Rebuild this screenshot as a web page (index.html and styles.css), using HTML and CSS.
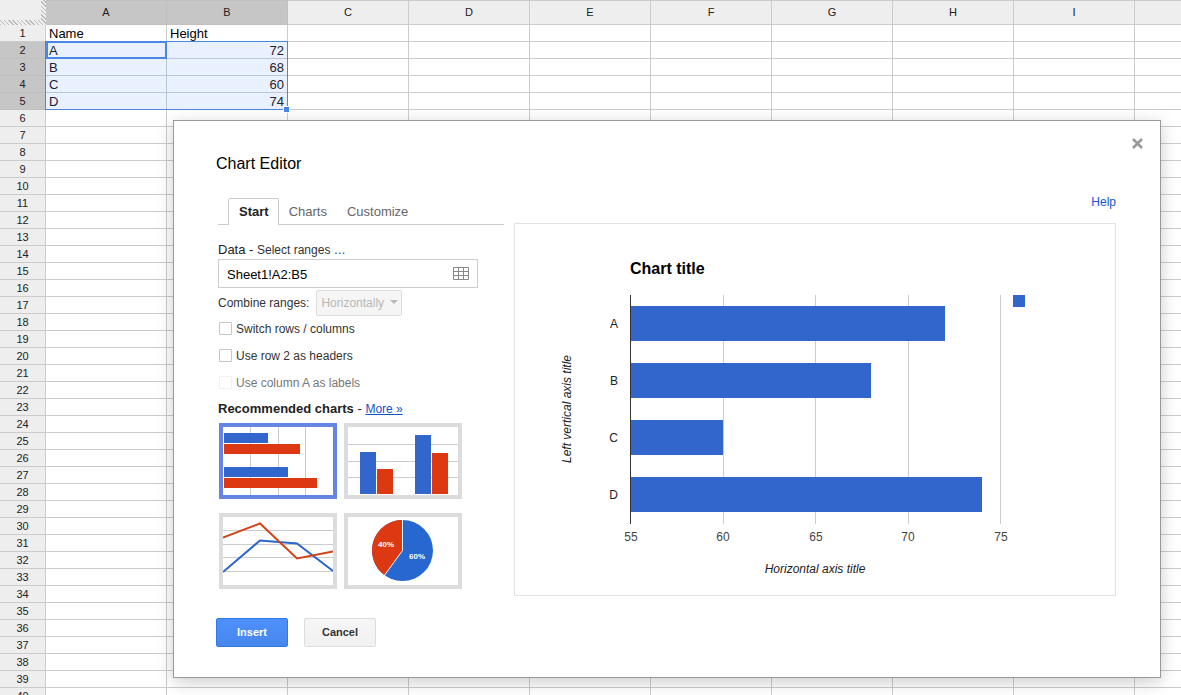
FILE: index.html
```
<!DOCTYPE html>
<html lang="en">
    <head>
        <meta charset="utf-8">
        <title>Chart Editor</title>
        <link rel="stylesheet" href="styles.css">
    </head>
    <body>

        <div class="sheet">
            <table class="grid">
                <thead></thead>
                <tbody></tbody>
            </table>
            <div class="selection">
                <div class="activecell"></div>
                <div class="handle"></div>
            </div>
        </div>

        <div class="dialog" role="dialog" aria-labelledby="dialogtitle">
            <button type="button" class="close" aria-label="Close">
                <svg width="11" height="11" viewBox="0 0 11 11"><path d="M1 1L10 10M10 1L1 10" stroke="#999" stroke-width="2.6" fill="none"/></svg>
            </button>

            <h1 class="title" id="dialogtitle">Chart Editor</h1>

            <div class="editor">
                <div class="options">
                    <div class="tabs" role="tablist">
                        <button type="button" class="tab active" role="tab">Start</button>
                        <button type="button" class="tab" role="tab">Charts</button>
                        <button type="button" class="tab" role="tab">Customize</button>
                    </div>

                    <div class="data">
                        <label for="range">Data - <span class="small">Select ranges …</span></label>
                    </div>
                    <div class="rangebox">
                        <input type="text" id="range" value="Sheet1!A2:B5">
                        <button type="button" class="pick" aria-label="Select data range">
                            <svg width="16" height="13" viewBox="0 0 16 13"><path d="M.5 .5H15.5V12.5H.5ZM.5 4.5H15.5M.5 8.5H15.5M5.5 .5V12.5M10.5 .5V12.5" stroke="#888" fill="none"/></svg>
                        </button>
                    </div>

                    <div class="combine">
                        <label for="combine">Combine ranges:</label>
                        <span class="dropdown">
                            <select id="combine" disabled>
                                <option>Horizontally</option>
                            </select>
                        </span>
                    </div>

                    <label class="check"><input type="checkbox"> Switch rows / columns</label>
                    <label class="check"><input type="checkbox"> Use row 2 as headers</label>
                    <label class="check disabled"><input type="checkbox" disabled> Use column A as labels</label>

                    <div class="recommended"><b>Recommended charts</b> - <a href="#">More »</a></div>

                    <div class="thumbs">
                        <button type="button" class="thumb active" aria-label="Bar chart">
                            <svg width="110" height="68" viewBox="0 0 110 68">
                                <path d="M27.5 0V68M55.5 0V68M82.5 0V68" stroke="#ccc"/>
                                <path d="M1 6H45V16H1ZM1 40H65V50H1Z" fill="#3366cc"/>
                                <path d="M1 17H77V27H1ZM1 51H94V61H1Z" fill="#dc3912"/>
                            </svg>
                        </button>
                        <button type="button" class="thumb" aria-label="Column chart">
                            <svg width="110" height="68" viewBox="0 0 110 68">
                                <path d="M0 17.5H110M0 34.5H110M0 50.5H110" stroke="#ccc"/>
                                <path d="M12 25H28V67H12ZM67 8H83V67H67Z" fill="#3366cc"/>
                                <path d="M29 42H45V67H29ZM84 26H100V67H84Z" fill="#dc3912"/>
                            </svg>
                        </button>
                        <button type="button" class="thumb" aria-label="Line chart">
                            <svg width="110" height="68" viewBox="0 0 110 68">
                                <path d="M0 13.5H110M0 27.5H110M0 40.5H110M0 54.5H110" stroke="#ccc"/>
                                <path d="M0 55L37 23.5L74 26.5L110 54" stroke="#2a66cc" stroke-width="2" fill="none"/>
                                <path d="M0 20.5L37 6.5L74 41.5L110 34.5" stroke="#d14319" stroke-width="2" fill="none"/>
                            </svg>
                        </button>
                        <button type="button" class="thumb" aria-label="Pie chart">
                            <svg width="110" height="68" viewBox="0 0 110 68">
                                <circle cx="54.5" cy="33.5" r="30.5" fill="#2767d0"/>
                                <path d="M54.5 33.5V3A30.5 30.5 0 0 0 36.6 58.2Z" fill="#dc3912"/>
                                <path d="M54.5 2V33.5L36 59" stroke="#fff" fill="none"/>
                                <text class="slice" x="38" y="30">40%</text>
                                <text class="slice" x="69" y="42">60%</text>
                            </svg>
                        </button>
                    </div>
                </div>

                <div class="preview">
                    <a href="#" class="help">Help</a>
                    <div class="chart">
                        <svg viewBox="0 0 600 371">
                            <text class="charttitle" x="115" y="50">Chart title</text>
                            <path d="M208.5 71V300M300.5 71V300M393.5 71V300M485.5 71V300" stroke="#ccc"/>
                            <g fill="#3366cc">
                                <rect x="116" y="82" width="314" height="35"/>
                                <rect x="116" y="139" width="240" height="35"/>
                                <rect x="116" y="196" width="92" height="35"/>
                                <rect x="116" y="253" width="351" height="35"/>
                                <rect x="498" y="71" width="12" height="12"/>
                            </g>
                            <path d="M115.5 71V300" stroke="#333"/>
                            <g class="names">
                                <text x="103" y="104">A</text>
                                <text x="103" y="161">B</text>
                                <text x="103" y="218">C</text>
                                <text x="103" y="275">D</text>
                            </g>
                            <g class="ticks">
                                <text x="116" y="317">55</text>
                                <text x="208" y="317">60</text>
                                <text x="301" y="317">65</text>
                                <text x="393" y="317">70</text>
                                <text x="486" y="317">75</text>
                            </g>
                            <text class="axis" x="300" y="349">Horizontal axis title</text>
                            <text class="axis" transform="translate(56 185) rotate(-90)">Left vertical axis title</text>
                        </svg>
                    </div>
                </div>
            </div>

            <div class="actions">
                <button type="button" class="btn primary">Insert</button>
                <button type="button" class="btn">Cancel</button>
            </div>
        </div>

        <script type="text/javascript">

            const gethead = document.querySelector('.grid thead');
            const getbody = document.querySelector('.grid tbody');

            const columns = ['A','B','C','D','E','F','G','H','I',''];
            const totalrows = 40;
            const values = [
                ['Name','Height'],
                ['A',72],
                ['B',68],
                ['C',60],
                ['D',74]
            ];

            function showhead(){
                let cells = '<th class="corner"></th>';

                columns.forEach((column,idx)=>{
                    cells += `<th class="${idx < 2 ? 'selected' : ''}">${column}</th>`;
                });

                gethead.innerHTML = `<tr>${cells}</tr>`;
            }

            function showrows(){
                let rows = '';

                for(let r = 1; r <= totalrows; r++){
                    const inrange = r >= 2 && r <= 5;
                    let cells = `<th class="${inrange ? 'selected' : ''}">${r}</th>`;

                    columns.forEach((column,idx)=>{
                        const value = values[r-1]?.[idx] ?? '';
                        const classes = [];

                        if(inrange && idx < 2) classes.push('inrange');
                        if(typeof value === 'number') classes.push('number');

                        cells += `<td class="${classes.join(' ')}">${value}</td>`;
                    });

                    rows += `<tr>${cells}</tr>`;
                }

                getbody.innerHTML = rows;
            }

            showhead();
            showrows();

        </script>
    </body>
</html>
```
FILE: styles.css
```
*{
    box-sizing: border-box;
}

body{
    font-family: "Liberation Sans", Arial, sans-serif;
    font-size: 13px;
    color: #222;
    background-color: #fff;

    margin: 0;
    height: 100vh;
    overflow: hidden;

    position: relative;
}

button, input, select{
    font-family: inherit;
    margin: 0;
}

a{
    color: #15c;
}

/* spreadsheet */

.sheet{
    position: relative;
    height: 100%;
    overflow: hidden;
}

.grid{
    width: 1256px;
    table-layout: fixed;
    border-collapse: separate;
    border-spacing: 0;
}

.grid th, .grid td{
    height: 17px;
    line-height: 16px;
    border-right: 1px solid #ccc;
    border-bottom: 1px solid #ccc;
    padding: 0 3px;
}

.grid th{
    font-size: 11px;
    font-weight: normal;
    background-color: #eee;
}

.grid thead th{
    height: 25px;
    border-top: 1px solid #ccc;
    padding-bottom: 2px;
}

.grid th:first-child{
    width: 46px;
}

.grid th.corner{
    border: none;
    border-right: 5px solid transparent;
    border-bottom: 5px solid transparent;
    background: linear-gradient(#eee, #eee) padding-box, repeating-linear-gradient(45deg, #bbb 0 1px, #eee 1px 3px) border-box;
}

.grid th.selected{
    background-color: #c6c6c6;
    border-color: #c0c0c0;
}

.grid td{
    line-height: 14px;
    color: #000;
    white-space: nowrap;
    padding-top: 2px;
}

.grid td.inrange{
    color: #223;
    background-color: #e9f0fe;
    border-color: #bcc5d6;
}

.grid td.number{
    text-align: right;
}

.selection{
    width: 243px;
    height: 69px;
    border: 1px solid #4a86e8;

    position: absolute;
    left: 45px;
    top: 41px;
}

.activecell{
    width: 121px;
    height: 18px;
    border: 2px solid #4a86e8;

    position: absolute;
    left: 0;
    top: -1px;
}

.handle{
    width: 7px;
    height: 7px;
    background-color: #4a86e8;
    border: 1px solid #fff;

    position: absolute;
    right: -3px;
    bottom: -4px;
}

/* dialog */

.dialog{
    background-color: #fff;
    border: 1px solid #999;
    box-shadow: 0 4px 16px rgba(0,0,0,0.2);
    padding: 33px 44px 30px 42px;

    position: absolute;
    top: 120px;
    left: 173px;
    right: 20px;
}

.close{
    background: none;
    border: none;
    padding: 5px;
    line-height: 0;

    position: absolute;
    top: 12px;
    right: 12px;
}

.title{
    font-size: 16px;
    font-weight: normal;
    line-height: 20px;
    color: #000;
    margin: 0 0 20px;
}

.editor{
    display: flex;
    gap: 10px;
}

.options{
    width: 288px;
    flex: none;
    padding: 4px 0 0 2px;
}

.tabs{
    display: flex;
    border-bottom: 1px solid #ccc;
    padding-left: 10px;
    margin-bottom: 17px;
}

.tab{
    height: 27px;
    font-size: 13px;
    color: #666;
    background: none;
    border: 1px solid transparent;
    border-bottom: none;
    padding: 0 9px 2px;
    margin-bottom: -1px;
}

.tab.active{
    font-weight: bold;
    color: #222;
    background-color: #fff;
    border-color: #ccc;
    border-radius: 2px 2px 0 0;
    padding-left: 10px;
}

.data{
    line-height: 16px;
    margin-bottom: 1px;
}

.small{
    font-size: 12px;
    color: #333;
}

.rangebox{
    width: 260px;
    height: 29px;
    border: 1px solid #ccc;

    display: flex;
    align-items: center;
}

.rangebox input{
    flex: 1;
    min-width: 0;
    font-size: 13px;
    color: #000;
    border: none;
    outline: none;
    padding: 1px 8px 0;
}

.pick{
    background: none;
    border: none;
    padding: 0 8px;
    line-height: 0;
}

.combine{
    font-size: 12px;
    color: #333;
    margin-top: 2px;

    display: flex;
    align-items: center;
    gap: 7px;
}

.dropdown{
    display: block;
    position: relative;
}

.dropdown select{
    display: block;
    width: 86px;
    height: 26px;
    font-size: 12px;
    color: #b8b8b8;
    background-color: #f5f5f5;
    border: 1px solid #ddd;
    border-radius: 2px;
    padding: 0 4px;
    opacity: 1;
    appearance: none;
}

.dropdown::after{
    content: "";
    border-left: 4px solid transparent;
    border-right: 4px solid transparent;
    border-top: 4px solid #b8b8b8;

    position: absolute;
    top: 10px;
    right: 4px;
}

.check{
    height: 27px;
    font-size: 12px;
    color: #333;
    padding: 0 0 2px 1px;

    display: flex;
    align-items: center;
    gap: 4px;
}

.check input{
    width: 13px;
    height: 13px;
    background-color: #fff;
    border: 1px solid #c6c6c6;
    border-radius: 1px;
    appearance: none;
}

.check.disabled{
    color: #777;
}

.check.disabled input{
    border-color: #f1f1f1;
}

.recommended{
    line-height: 18px;
    margin: 3px 0 5px;
}

.recommended a{
    font-size: 12px;
}

.thumbs{
    display: grid;
    grid-template-columns: 118px 118px;
    gap: 14px 7px;
    padding-left: 1px;
}

.thumb{
    height: 76px;
    background-color: #fff;
    border: 4px solid #dcdcdc;
    padding: 0;
}

.thumb.active{
    border-color: #6586e0;
}

.thumb svg{
    display: block;
}

.slice{
    font-size: 8px;
    font-weight: bold;
    fill: #fff;
    text-anchor: middle;
}

.preview{
    flex: 1;
    display: flex;
    flex-direction: column;
}

.help{
    align-self: flex-end;
    font-size: 12px;
    line-height: 16px;
    text-decoration: none;
    margin-bottom: 13px;
}

.chart{
    border: 1px solid #e2e2e2;
}

.chart svg{
    display: block;
    width: 100%;
}

.chart text{
    font-size: 12px;
    fill: #222;
}

.chart .charttitle{
    font-size: 16px;
    font-weight: bold;
    fill: #000;
}

.chart .names text{
    text-anchor: end;
}

.chart .ticks text{
    fill: #444;
    text-anchor: middle;
}

.chart .axis{
    font-style: italic;
    text-anchor: middle;
}

.actions{
    display: flex;
    gap: 16px;
    margin-top: 22px;
}

.btn{
    width: 72px;
    height: 29px;
    font-size: 11px;
    font-weight: bold;
    color: #333;
    background: linear-gradient(#f6f6f6, #f1f1f1);
    border: 1px solid #dcdcdc;
    border-radius: 2px;
    padding: 0 0 1px;
}

.btn.primary{
    color: #fff;
    background: linear-gradient(#4d90fe, #4787ed);
    border-color: #3079ed;
}
```
